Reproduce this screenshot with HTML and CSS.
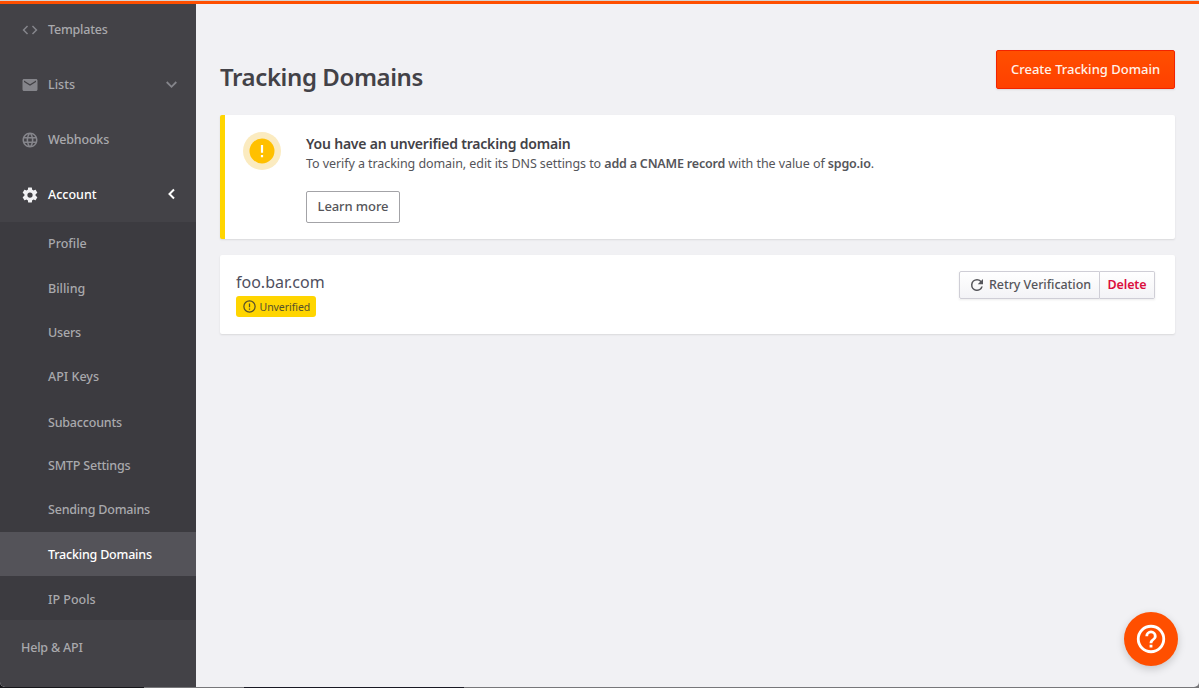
FILE: index.html
```html
<!DOCTYPE html>
<html lang="en">
<head>
<meta charset="utf-8">
<title>Tracking Domains</title>
<link rel="stylesheet" href="styles.css">
</head>
<body>
<div class="window">
  <div class="topbar"></div>
  <div class="layout">
    <nav class="sidebar">
      <a class="nav-item"><svg class="nav-icon" viewBox="0 0 24 24"><path d="M9.4 16.6 4.8 12l4.6-4.6L8 6l-6 6 6 6zm5.2 0 4.6-4.6-4.6-4.6L16 6l6 6-6 6z"/></svg><span class="tight">Templates</span></a>
      <a class="nav-item"><svg class="nav-icon" viewBox="0 0 24 24"><path d="M20 4H4c-1.100 0-2 .9-2 2v12c0 1.100.9 2 2 2h16c1.100 0 2-.9 2-2V6c0-1.100-.9-2-2-2zm0 4-8 5-8-5V6l8 5 8-5z"/></svg><span>Lists</span><svg class="nav-arrow" viewBox="0 0 18 18"><path d="m3.700 6 4.800 4.800L13.300 6" fill="none" stroke="currentColor" stroke-width="1.800"/></svg></a>
      <a class="nav-item"><svg class="nav-icon" viewBox="0 0 24 24"><path d="M12 2C6.500 2 2 6.500 2 12s4.500 10 10 10 10-4.500 10-10S17.500 2 12 2zm6.900 6h-3c-.3-1.200-.8-2.400-1.400-3.600 1.900.7 3.400 2 4.400 3.600zM12 4c.8 1.200 1.500 2.500 1.900 4h-3.800c.4-1.500 1.100-2.800 1.900-4zM4.300 14a8 8 0 0 1 0-4h3.300a16 16 0 0 0 0 4zm.8 2h3c.3 1.300.8 2.500 1.400 3.600A8 8 0 0 1 5.100 16zm3-8h-3a8 8 0 0 1 4.400-3.600C8.900 5.500 8.400 6.700 8.100 8zM12 20c-.8-1.200-1.500-2.500-1.900-4h3.800c-.4 1.500-1.100 2.800-1.900 4zm2.300-6H9.700a15 15 0 0 1 0-4h4.600a15 15 0 0 1 0 4zm.3 5.600c.6-1.100 1.100-2.300 1.400-3.600h3a8 8 0 0 1-4.400 3.600zm1.800-5.600a16 16 0 0 0 0-4h3.300a8 8 0 0 1 0 4z"/></svg><span class="tight">Webhooks</span></a>
      <a class="nav-item nav-item-open"><svg class="nav-icon" viewBox="0 0 24 24"><path d="M19.430 12.980c.040-.320.070-.640.070-.980s-.030-.660-.070-.980l2.110-1.650c.190-.150.240-.420.120-.640l-2-3.460c-.120-.220-.390-.300-.610-.220l-2.490 1c-.520-.400-1.080-.730-1.690-.980l-.380-2.650C14.460 2.180 14.250 2 14 2h-4c-.250 0-.460.180-.490.420l-.380 2.650c-.610.250-1.170.590-1.690.980l-2.490-1c-.230-.090-.490 0-.610.220l-2 3.460c-.130.220-.070.490.120.640l2.110 1.650c-.040.320-.070.650-.070.980s.030.660.070.980l-2.110 1.650c-.190.150-.240.420-.120.640l2 3.460c.120.220.390.300.610.220l2.490-1c.520.400 1.080.730 1.690.980l.380 2.650c.030.240.240.420.490.420h4c.250 0 .460-.180.490-.420l.380-2.650c.610-.250 1.170-.590 1.690-.980l2.490 1c.230.090.490 0 .610-.220l2-3.460c.120-.220.070-.490-.120-.640zM12 15.500a3.500 3.500 0 1 1 0-7 3.500 3.500 0 0 1 0 7z"/></svg><span>Account</span><svg class="nav-arrow nav-arrow-open" viewBox="0 0 18 18"><path d="m11 4.500-4.500 4.500 4.500 4.500" fill="none" stroke="currentColor" stroke-width="2"/></svg></a>
      <div class="subnav">
        <a class="sub-item sub-item-first">Profile</a>
        <a class="sub-item">Billing</a>
        <a class="sub-item tight">Users</a>
        <a class="sub-item">API Keys</a>
        <a class="sub-item tight sub-item-low">Subaccounts</a>
        <a class="sub-item tight">SMTP Settings</a>
        <a class="sub-item tight">Sending Domains</a>
        <a class="sub-item tight sub-item-low sub-item-active">Tracking Domains</a>
        <a class="sub-item sub-item-low">IP Pools</a>
      </div>
      <a class="nav-item nav-help"><span class="tight">Help &amp; API</span></a>
    </nav>
    <main class="content">
      <header class="page-header">
        <h1 class="page-title">Tracking Domains</h1>
        <button class="btn-primary">Create Tracking Domain</button>
      </header>
      <section class="banner">
        <div class="banner-icon"><svg viewBox="0 0 38 38"><circle cx="19" cy="19" r="19" fill="#fbebc0"/><circle cx="19" cy="19" r="12.500" fill="#ffc000"/><path d="M17.900 13h2.200v7.800h-2.200zm0 10h2.200v2.200h-2.200z" fill="#fff"/></svg></div>
        <div class="banner-body">
          <h2 class="banner-title">You have an unverified tracking domain</h2>
          <p class="banner-text">To verify a tracking domain, edit its DNS settings to <b>add a CNAME record</b> with the value of <b>spgo.io</b>.</p>
          <button class="btn-outline">Learn more</button>
        </div>
      </section>
      <section class="domain-card">
        <div>
          <div class="domain-name">foo.bar.com</div>
          <div class="tag"><svg class="tag-icon" viewBox="0 0 24 24"><path d="M11 15h2v2h-2zm0-8h2v6h-2zm1-5a10 10 0 1 0 0 20 10 10 0 0 0 0-20zm0 18a8 8 0 1 1 0-16 8 8 0 0 1 0 16z"/></svg><span>Unverified</span></div>
        </div>
        <div class="btn-group">
          <button class="btn-small btn-retry"><svg class="retry-icon" viewBox="0 0 24 24"><path d="M17.650 6.350A7.960 7.960 0 0 0 12 4a8 8 0 1 0 7.730 10h-2.080A6 6 0 1 1 12 6c1.660 0 3.140.690 4.220 1.780L13 11h7V4z"/></svg><span>Retry Verification</span></button>
          <button class="btn-small btn-delete">Delete</button>
        </div>
      </section>
    </main>
  </div>
</div>
<button class="help-fab"><svg viewBox="0 0 24 24"><path d="M11 18h2v-2h-2zm1-16a10 10 0 1 0 0 20 10 10 0 0 0 0-20zm0 18a8 8 0 1 1 0-16 8 8 0 0 1 0 16zm0-14a4 4 0 0 0-4 4h2a2 2 0 1 1 4 0c0 2-3 1.750-3 5h2c0-2.250 3-2.500 3-5a4 4 0 0 0-4-4z"/></svg></button>
</body>
</html>
```
FILE: styles.css
```css
* { box-sizing: border-box; }
body {
  margin: 0;
  height: 688px;
  overflow: hidden;
  background: linear-gradient(90deg, #17171b 0 144px, #77777a 144px 244px, #191923 244px 464px, #77777a 464px);
  font-family: "Noto Sans", "Open Sans", sans-serif;
  font-size: 12.500px;
  color: #55555a;
}
button { font-family: inherit; margin: 0; padding: 0; }
h1, h2, p { margin: 0; }
svg { display: block; flex: none; fill: currentColor; }
.window {
  height: 687px;
  overflow: hidden;
  border-radius: 0 0 5px 5px;
  background: #f1f1f4;
}
.topbar { height: 4px; background: #ff4f00; border-top: 1px solid #d5d3d2; }
.layout { display: flex; height: 683px; }
.sidebar {
  flex: none;
  width: 196px;
  background: #434247;
  color: #a9a9ad;
  font-weight: 500;
  white-space: nowrap;
  overflow: hidden;
}
.tight { letter-spacing: -.2px; }
.nav-item {
  display: flex;
  align-items: center;
  height: 55px;
  padding: 0 15px 0 21px;
}
.nav-item:first-child { height: 53px; padding-bottom: 1px; }
.nav-item:first-child span { padding-bottom: 1px; }
.nav-item-open { color: #fff; }
.nav-icon { width: 18px; height: 18px; margin-right: 9px; color: #85858b; }
.nav-item-open .nav-icon { color: #f1f1f4; }
.nav-arrow { width: 18px; height: 18px; margin-left: auto; color: #85858b; }
.nav-arrow-open { color: #fff; margin-bottom: 2px; }
.subnav { height: 398px; background: #3c3b40; }
.sub-item { display: flex; align-items: center; height: 44.250px; padding-left: 48px; }
.sub-item-first { padding-bottom: 2px; }
.sub-item-low { padding-top: 2px; }
.sub-item-active { background: #545359; color: #fff; }
.content { flex: 1; padding: 46px 24px 0; }
.page-header { display: flex; justify-content: space-between; height: 65px; }
.page-title {
  margin-top: 9px;
  font-size: 24px;
  line-height: 36px;
  font-weight: 600;
  letter-spacing: -.4px;
  color: #434247;
  white-space: nowrap;
}
.btn-primary {
  width: 179px;
  height: 39px;
  padding-bottom: 2px;
  border: 1px solid #f22300;
  border-radius: 2px;
  background: linear-gradient(#ff4f00, #ff4000);
  box-shadow: 0 1px 2px rgba(0, 0, 0, .1);
  color: #fff3ea;
  font-size: 13px;
  font-weight: 500;
  white-space: nowrap;
}
.banner, .domain-card {
  display: flex;
  border-radius: 2px;
  background: #fff;
  box-shadow: 0 1px 2px rgba(0, 0, 0, .1);
}
.banner { height: 124px; border-left: 5px solid #ffd500; padding: 17px 0 0 18px; }
.banner-icon { width: 38px; height: 38px; margin-right: 25px; }
.banner-title {
  margin-top: 2px;
  font-size: 14px;
  line-height: 20px;
  font-weight: 600;
  letter-spacing: -.2px;
  color: #434247;
}
.banner-text { line-height: 18px; margin-top: 1px; white-space: nowrap; letter-spacing: -.07px; }
.banner-text b { font-weight: 600; letter-spacing: -.2px; }
.btn-outline {
  width: 94px;
  height: 32px;
  margin-top: 18px;
  padding-bottom: 2px;
  border: 1px solid #a3a3a7;
  border-radius: 2px;
  background: #fff;
  color: #55555a;
  font-size: 13px;
  font-weight: 500;
  letter-spacing: -.1px;
  white-space: nowrap;
}
.domain-card { justify-content: space-between; height: 79px; margin-top: 16px; padding: 16px 20px 0 16px; }
.domain-name { font-size: 16px; line-height: 22px; color: #4f4f60; }
.tag {
  display: flex;
  align-items: center;
  width: 80px;
  height: 21px;
  margin-top: 3px;
  padding-left: 6px;
  border-radius: 3px;
  background: #ffd500;
  color: #55502c;
  font-size: 10.500px;
  letter-spacing: -.05px;
}
.tag-icon { width: 15px; height: 15px; margin-right: 2.500px; }
.btn-group { display: flex; height: 28px; box-shadow: 0 1px 2px rgba(0, 0, 0, .08); }
.btn-small {
  display: flex;
  align-items: center;
  justify-content: center;
  border: 1px solid #cfced6;
  background: linear-gradient(#fff, #f3f3f6);
  font-size: 12.500px;
  font-weight: 500;
  white-space: nowrap;
}
.btn-retry { width: 141px; border-radius: 2px 0 0 2px; color: #55555a; }
.btn-retry span { padding-bottom: 2px; letter-spacing: -.05px; }
.btn-delete { width: 55px; padding-bottom: 2px; border-left: 0; border-radius: 0 2px 2px 0; color: #db0f3e; font-weight: 600; letter-spacing: -.1px; }
.retry-icon { width: 18px; height: 18px; margin-right: 3px; }
.help-fab {
  position: absolute;
  left: 1124px;
  top: 612px;
  width: 54px;
  height: 54px;
  display: flex;
  align-items: center;
  justify-content: center;
  border: 0;
  border-radius: 50%;
  padding: 0;
  background: #ff4f00;
  color: #fff;
  box-shadow: 0 3px 8px rgba(0, 0, 0, .18);
}
.help-fab svg { width: 34px; height: 34px; }
```
